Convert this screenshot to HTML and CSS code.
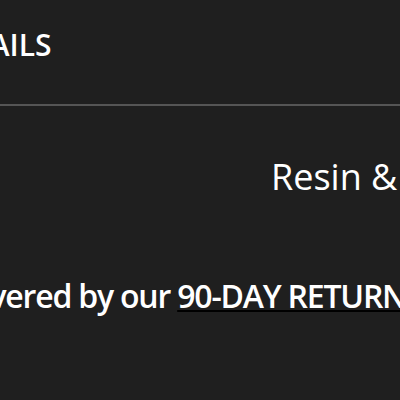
FILE: index.html
```html
<!DOCTYPE html>
<html>
<head>
<meta charset="utf-8">
<link rel="stylesheet" href="styles.css">
</head>
<body>
<div class="page">
  <header class="head">
    <h2 class="title">DETAILS</h2>
  </header>
  <div class="rule"></div>
  <p class="material">Resin &amp; Metal</p>
  <p class="returns">Covered by our <a class="link" href="#">90-DAY RETURN POLICY</a></p>
</div>
</body>
</html>
```
FILE: styles.css
```css
html, body {
  margin: 0;
  padding: 0;
  background: #1f1f1f;
  overflow: hidden;
}
.page {
  width: 400px;
  height: 400px;
  overflow: hidden;
  font-family: "Open Sans", "Liberation Sans", sans-serif;
  color: #fff;
  white-space: nowrap;
}
.head {
  height: 104px;
  display: flex;
  align-items: flex-start;
}
.title {
  margin: 23px 0 0 -66px;
  font-size: 30px;
  font-weight: 600;
  line-height: 44px;
}
.rule {
  height: 2px;
  background: #555;
}
.material {
  margin: 47px 0 0 271px;
  font-size: 36px;
  font-weight: 400;
  line-height: 48px;
}
.returns {
  margin: 72px 0 0 -48px;
  font-size: 32px;
  font-weight: 600;
  letter-spacing: -1.2px;
  line-height: 46px;
}
.link {
  color: #fff;
  text-decoration: underline;
  text-decoration-color: #000;
  text-decoration-thickness: 2px;
  text-underline-offset: 2px;
}
```
